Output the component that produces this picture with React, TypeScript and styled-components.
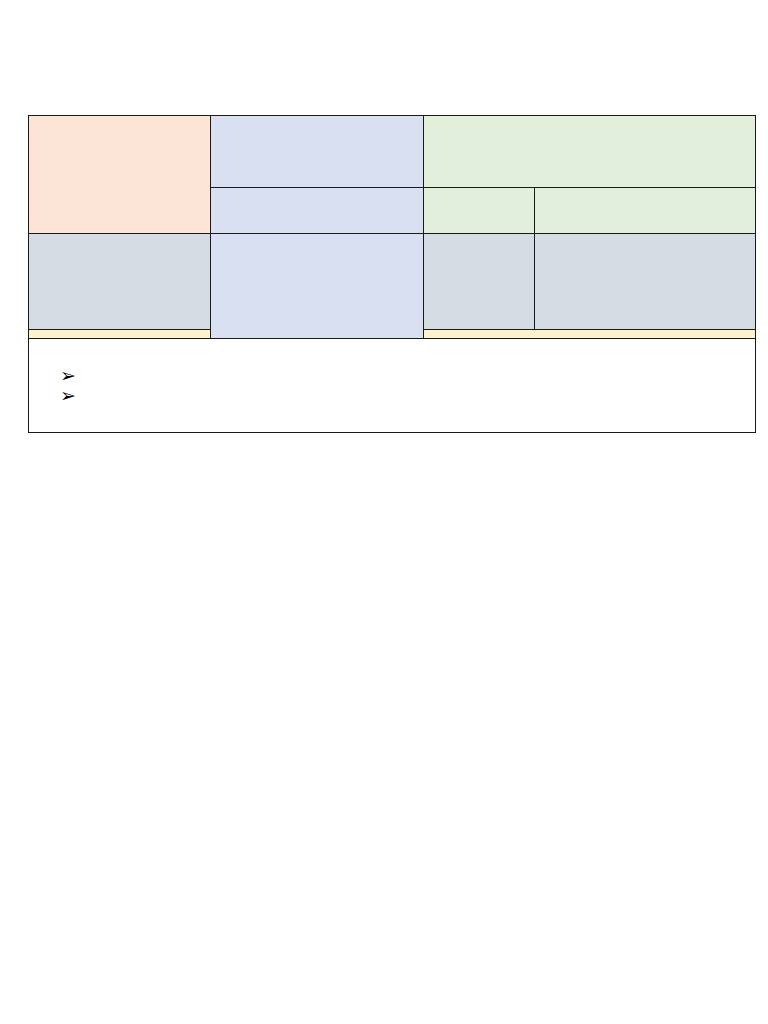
import React from "react";
import styled, { createGlobalStyle } from "styled-components";

const Global = createGlobalStyle`
  html, body { margin: 0; padding: 0; background: #ffffff; }
  body { font-family: "Liberation Sans", Arial, sans-serif; }
`;

const Page = styled.div`
  padding: 115px 0 0 28px;
  width: 768px;
  height: 1024px;
  box-sizing: border-box;
`;

const Frame = styled.div`
  width: 728px;
  display: flex;
  flex-direction: column;
`;

const Grid = styled.div`
  display: grid;
  grid-template-columns: 181px 212px 110px 220px;
  grid-template-rows: 71px 45px 95px 8px;
  gap: 1px;
  padding: 1px;
  background: #1a1a1a;
`;

type CellProps = { $bg: string; $col: string; $row: string };

const Cell = styled.div<CellProps>`
  background: ${(p) => p.$bg};
  grid-column: ${(p) => p.$col};
  grid-row: ${(p) => p.$row};
`;

const Notes = styled.ul`
  margin: 0;
  height: 94px;
  box-sizing: border-box;
  border: 1px solid #1a1a1a;
  border-top: none;
  padding: 26px 0 0 31px;
  list-style: none;
  display: flex;
  flex-direction: column;
  gap: 0;
`;

const Note = styled.li`
  font-family: "DejaVu Sans", sans-serif;
  font-size: 19px;
  line-height: 20px;
  color: #000;
  height: 20px;
`;

const PEACH = "#fce4d6";
const BLUE = "#d9e0f2";
const GREEN = "#e2efda";
const GRAY = "#d5dce4";
const YELLOW = "#fff2cc";

export default function App() {
  return (
    <>
      <Global />
      <Page>
        <Frame>
          <Grid>
            <Cell $bg={PEACH} $col="1" $row="1 / span 2" />
            <Cell $bg={BLUE} $col="2" $row="1" />
            <Cell $bg={GREEN} $col="3 / span 2" $row="1" />
            <Cell $bg={BLUE} $col="2" $row="2" />
            <Cell $bg={GREEN} $col="3" $row="2" />
            <Cell $bg={GREEN} $col="4" $row="2" />
            <Cell $bg={GRAY} $col="1" $row="3" />
            <Cell $bg={BLUE} $col="2" $row="3 / span 2" />
            <Cell $bg={GRAY} $col="3" $row="3" />
            <Cell $bg={GRAY} $col="4" $row="3" />
            <Cell $bg={YELLOW} $col="1" $row="4" />
            <Cell $bg={YELLOW} $col="3 / span 2" $row="4" />
          </Grid>
          <Notes>
            <Note>➢</Note>
            <Note>➢</Note>
          </Notes>
        </Frame>
      </Page>
    </>
  );
}
